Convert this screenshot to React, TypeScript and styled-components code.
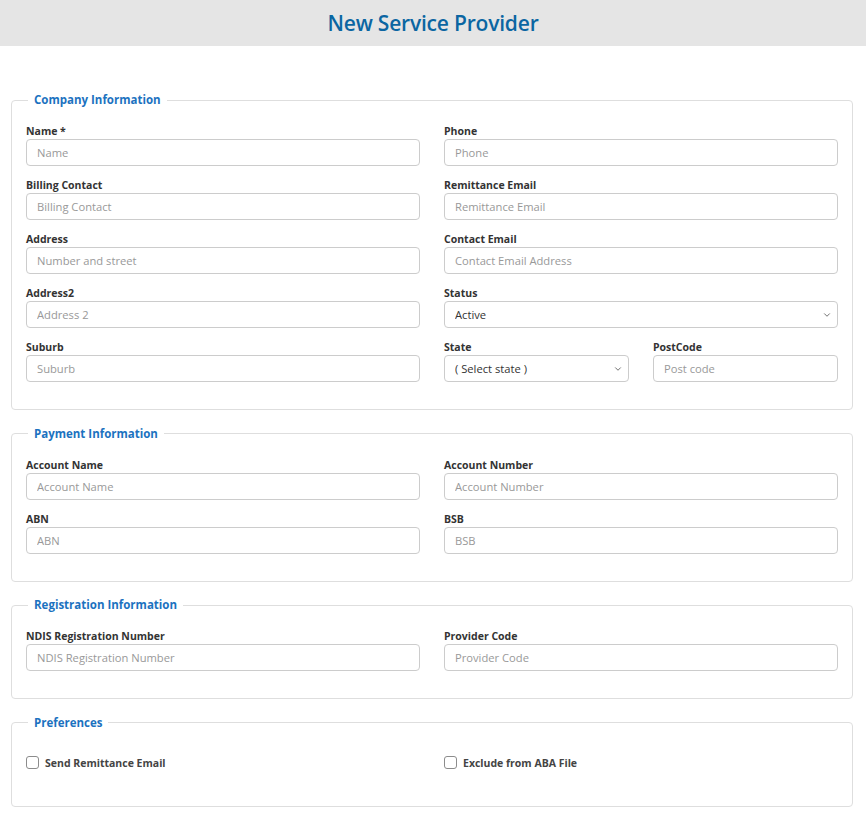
import React from 'react';
import styled, {createGlobalStyle} from 'styled-components';
import {ChevronDown} from 'lucide-react';

const GlobalStyle = createGlobalStyle`
  html, body {
    margin: 0;
    padding: 0;
    background: #ffffff;
    font-family: "Open Sans", "Noto Sans", Arial, sans-serif;
  }
`;

const Page = styled.div`
  width: 866px;
  min-height: 813px;
  background: #ffffff;
`;

const Header = styled.header`
  height: 46px;
  background: #e5e5e5;
  display: flex;
  align-items: center;
  justify-content: center;
`;

const PageTitle = styled.h1`
  margin: 0;
  font-size: 21px;
  font-weight: 600;
  color: #0b66a2;
  letter-spacing: -0.2px;
`;

const Body = styled.main`
  padding: 46px 13px 0 11px;
  display: flex;
  flex-direction: column;
  gap: 15.5px;
`;

const Section = styled.fieldset`
  margin: 0;
  padding: 16px 14px 27px;
  border: 1px solid #dedede;
  border-radius: 4px;
  min-width: 0;
`;

const Legend = styled.legend`
  margin-left: 2px;
  padding: 0 6px;
  font-size: 11.5px;
  font-weight: 700;
  line-height: 16px;
  color: #1c72c0;
`;

const Grid = styled.div`
  display: grid;
  grid-template-columns: 1fr 1fr;
  column-gap: 24px;
  row-gap: 12px;
`;

const Split = styled.div`
  display: grid;
  grid-template-columns: 1fr 1fr;
  column-gap: 24px;
`;

const Field = styled.label`
  display: flex;
  flex-direction: column;
  gap: 1px;
`;

const LabelText = styled.span`
  font-size: 10.5px;
  font-weight: 700;
  line-height: 14px;
  color: #333333;
`;

const Input = styled.input`
  box-sizing: border-box;
  height: 27px;
  width: 100%;
  padding: 0 10px;
  border: 1px solid #cccccc;
  border-radius: 4px;
  font-family: inherit;
  font-size: 11.2px;
  color: #333333;
  background: #ffffff;
  outline: none;

  &::placeholder {
    color: #999999;
  }
`;

const SelectWrap = styled.div`
  position: relative;
`;

const Select = styled.select`
  box-sizing: border-box;
  height: 27px;
  width: 100%;
  padding: 0 24px 0 10px;
  border: 1px solid #cccccc;
  border-radius: 4px;
  font-family: inherit;
  font-size: 11.2px;
  color: #333333;
  background: #ffffff;
  appearance: none;
  outline: none;
`;

const Chevron = styled(ChevronDown)`
  position: absolute;
  right: 6px;
  top: 9px;
  color: #555555;
  pointer-events: none;
`;

const CheckRow = styled.div`
  display: grid;
  grid-template-columns: 1fr 1fr;
  column-gap: 24px;
  height: 32px;
  align-items: center;
`;

const CheckLabel = styled.label`
  display: flex;
  align-items: center;
  gap: 6px;
  font-size: 10.5px;
  font-weight: 700;
  color: #444444;
`;

const Box = styled.span`
  box-sizing: border-box;
  width: 13px;
  height: 13px;
  border: 1px solid #8c8c8c;
  border-radius: 3px;
  background: #ffffff;
`;

type TextProps = { label: string; placeholder: string };

const TextField = ({label, placeholder}: TextProps) => (
    <Field>
        <LabelText>{label}</LabelText>
        <Input type="text" placeholder={placeholder}/>
    </Field>
);

const SelectField = ({label, options}: { label: string; options: string[] }) => (
    <Field>
        <LabelText>{label}</LabelText>
        <SelectWrap>
            <Select defaultValue={options[0]}>
                {options.map(o => <option key={o}>{o}</option>)}
            </Select>
            <Chevron size={10} strokeWidth={2}/>
        </SelectWrap>
    </Field>
);

const Check = ({label}: { label: string }) => (
    <CheckLabel>
        <Box/>
        {label}
    </CheckLabel>
);

export default function App() {
    return (
        <Page>
            <GlobalStyle/>
            <Header>
                <PageTitle>New Service Provider</PageTitle>
            </Header>
            <Body>
                <Section>
                    <Legend>Company Information</Legend>
                    <Grid>
                        <TextField label="Name *" placeholder="Name"/>
                        <TextField label="Phone" placeholder="Phone"/>
                        <TextField label="Billing Contact" placeholder="Billing Contact"/>
                        <TextField label="Remittance Email" placeholder="Remittance Email"/>
                        <TextField label="Address" placeholder="Number and street"/>
                        <TextField label="Contact Email" placeholder="Contact Email Address"/>
                        <TextField label="Address2" placeholder="Address 2"/>
                        <SelectField label="Status" options={['Active', 'Inactive']}/>
                        <TextField label="Suburb" placeholder="Suburb"/>
                        <Split>
                            <SelectField label="State" options={['( Select state )', 'NSW', 'VIC', 'QLD', 'SA', 'WA', 'TAS', 'NT', 'ACT']}/>
                            <TextField label="PostCode" placeholder="Post code"/>
                        </Split>
                    </Grid>
                </Section>

                <Section>
                    <Legend>Payment Information</Legend>
                    <Grid>
                        <TextField label="Account Name" placeholder="Account Name"/>
                        <TextField label="Account Number" placeholder="Account Number"/>
                        <TextField label="ABN" placeholder="ABN"/>
                        <TextField label="BSB" placeholder="BSB"/>
                    </Grid>
                </Section>

                <Section>
                    <Legend>Registration Information</Legend>
                    <Grid>
                        <TextField label="NDIS Registration Number" placeholder="NDIS Registration Number"/>
                        <TextField label="Provider Code" placeholder="Provider Code"/>
                    </Grid>
                </Section>

                <Section>
                    <Legend>Preferences</Legend>
                    <CheckRow>
                        <Check label="Send Remittance Email"/>
                        <Check label="Exclude from ABA File"/>
                    </CheckRow>
                </Section>
            </Body>
        </Page>
    );
}
